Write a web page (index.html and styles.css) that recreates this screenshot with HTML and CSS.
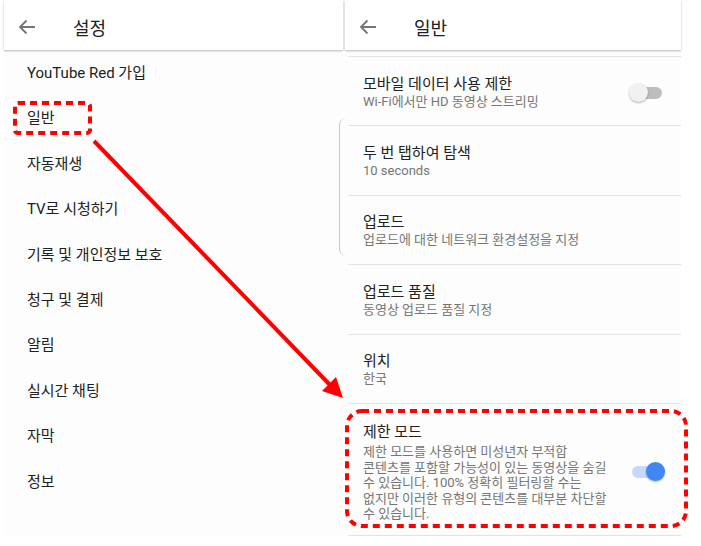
FILE: index.html
```html
<!DOCTYPE html>
<html lang="ko">
<head>
  <meta charset="UTF-8" />
  <meta name="viewport" content="width=device-width, initial-scale=1.0"/>
  <title>설정 - 일반</title>
  <link rel="stylesheet" href="styles.css">
</head>
<body>
  <div class="screens">
    <section class="screen screen-left">
      <header class="appbar">
        <svg class="back" width="18" height="16" viewBox="0 0 18 16"><path d="M17 8H2M8.5 1.5L2 8l6.5 6.5" fill="none" stroke="#757575" stroke-width="1.8"/></svg>
        <h1>설정</h1>
      </header>
      <ul class="menu">
        <li>YouTube Red 가입</li>
        <li>일반</li>
        <li>자동재생</li>
        <li>TV로 시청하기</li>
        <li>기록 및 개인정보 보호</li>
        <li>청구 및 결제</li>
        <li>알림</li>
        <li>실시간 채팅</li>
        <li>자막</li>
        <li>정보</li>
      </ul>
    </section>

    <div class="edge"></div>

    <section class="screen screen-right">
      <header class="appbar">
        <svg class="back" width="18" height="16" viewBox="0 0 18 16"><path d="M17 8H2M8.5 1.5L2 8l6.5 6.5" fill="none" stroke="#757575" stroke-width="1.8"/></svg>
        <h1>일반</h1>
      </header>
      <div class="settings">
        <div class="setting">
          <div class="setting-text">
            <div class="setting-title">모바일 데이터 사용 제한</div>
            <div class="setting-desc">Wi-Fi에서만 HD 동영상 스트리밍</div>
          </div>
          <span class="switch"></span>
        </div>
        <div class="setting">
          <div class="setting-text">
            <div class="setting-title">두 번 탭하여 탐색</div>
            <div class="setting-desc">10 seconds</div>
          </div>
        </div>
        <div class="setting">
          <div class="setting-text">
            <div class="setting-title">업로드</div>
            <div class="setting-desc">업로드에 대한 네트워크 환경설정을 지정</div>
          </div>
        </div>
        <div class="setting">
          <div class="setting-text">
            <div class="setting-title">업로드 품질</div>
            <div class="setting-desc">동영상 업로드 품질 지정</div>
          </div>
        </div>
        <div class="setting">
          <div class="setting-text">
            <div class="setting-title">위치</div>
            <div class="setting-desc">한국</div>
          </div>
        </div>
        <div class="setting setting-long">
          <div class="setting-text">
            <div class="setting-title">제한 모드</div>
            <div class="setting-desc">제한 모드를 사용하면 미성년자 부적합<br>콘텐츠를 포함할 가능성이 있는 동영상을 숨길<br>수 있습니다. 100% 정확히 필터링할 수는<br>없지만 이러한 유형의 콘텐츠를 대부분 차단할<br>수 있습니다.</div>
          </div>
          <span class="switch on"></span>
        </div>
      </div>
    </section>
  </div>

  <!-- annotation layer -->
  <svg class="marks" width="701" height="546" viewBox="0 0 701 546">
    <rect x="15" y="103" width="75" height="30" rx="3" fill="none" stroke="#f00" stroke-width="4" stroke-dasharray="7 5"/>
    <rect x="347" y="411" width="339" height="115" rx="15" fill="none" stroke="#f00" stroke-width="4" stroke-dasharray="7 5"/>
    <line x1="94" y1="141" x2="332" y2="387" stroke="#f00" stroke-width="4"/>
    <polygon points="343,398 322,391 336,377" fill="#f00"/>
  </svg>
</body>
</html>
```

FILE: styles.css
```css
:root {
  --text-main: #212121;
  --text-sub: #757575;
  --divider: #e4e4e4;
}

body {
  margin: 0;
  width: 701px;
  height: 546px;
  background: #fff;
  font-family: Roboto, "Noto Sans CJK KR", sans-serif;
  color: var(--text-main);
  overflow: hidden;
  position: relative;
}

.screens {
  display: flex;
  padding-left: 4px;
  height: 546px;
}

.screen {
  display: flex;
  flex-direction: column;
  background: #fdfdfd;
}

.screen-left {
  width: 339px;
  height: 537px;
}

.screen-right {
  width: 336px;
  height: 537px;
  margin-left: 2px;
}

.edge {
  position: absolute;
  left: 339px;
  top: 118px;
  width: 6px;
  height: 138px;
  border-left: 1px solid #c8c8c8;
  border-radius: 10px 0 0 10px;
}

.appbar {
  height: 50px;
  box-sizing: border-box;
  padding: 4px 0 0 14px;
  display: flex;
  align-items: center;
  background: #fff;
  box-shadow: 0 1px 2px rgba(0, 0, 0, 0.28);
  position: relative;
  z-index: 1;
}

.appbar h1 {
  margin: 0 0 0 37px;
  font-size: 18px;
  font-weight: 400;
  color: var(--text-main);
}

.menu {
  list-style: none;
  margin: 0;
  padding: 1px 0 0;
}

.menu li {
  height: 45.4px;
  line-height: 45.4px;
  padding-left: 23px;
  font-size: 15px;
}

.settings {
  padding-top: 6px;
  padding-left: 3px;
}

.setting {
  display: flex;
  align-items: center;
  justify-content: space-between;
  height: 69.4px;
  box-sizing: border-box;
  padding: 3px 19px 0 15px;
  border-top: 1px solid var(--divider);
}

.setting-long {
  height: 133px;
  border-bottom: 1px solid var(--divider);
  padding-top: 6px;
}

.setting-title {
  font-size: 15px;
  line-height: 18px;
}

.setting-desc {
  font-size: 13px;
  line-height: 18px;
  color: var(--text-sub);
}

.setting-long .setting-desc {
  line-height: 15.4px;
  margin-top: 3px;
}

.switch {
  position: relative;
  width: 30px;
  height: 12px;
  border-radius: 6px;
  background: #bdbdbd;
}

.switch::after {
  content: "";
  position: absolute;
  left: -3px;
  top: -4px;
  width: 19px;
  height: 19px;
  border-radius: 50%;
  background: #f1f1f1;
  box-shadow: 0 1px 2px rgba(0, 0, 0, 0.3);
}

.switch.on {
  background: #c5d9f8;
}

.switch.on::after {
  left: auto;
  right: -3px;
  background: #4285f4;
}

.marks {
  position: absolute;
  left: 0;
  top: 0;
  z-index: 2;
  pointer-events: none;
}
```
